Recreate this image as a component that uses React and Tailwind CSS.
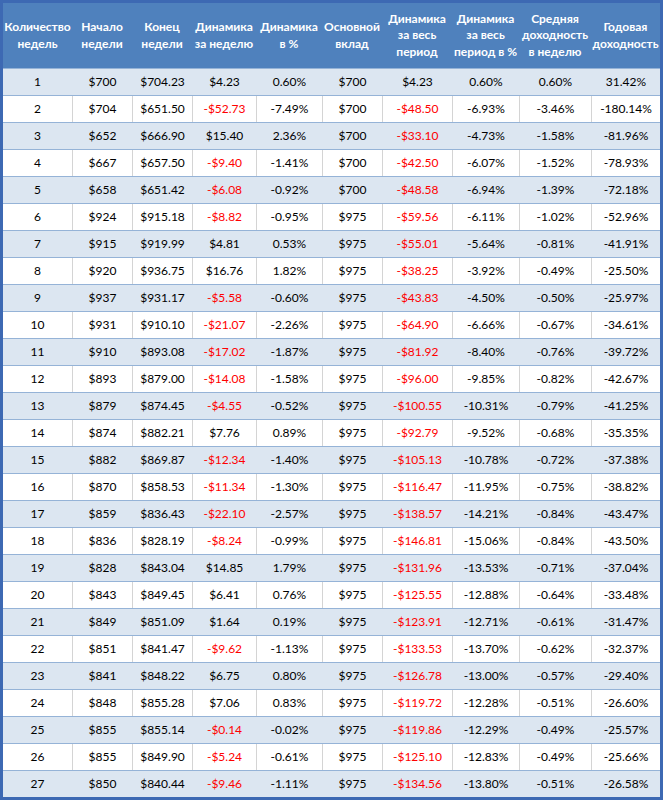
import React from "react";

// column widths taken from the grid lines of the sheet
const cols = "grid-cols-[69px_60px_60px_64px_66px_60px_70px_67px_72px_69px]";

const headers = [
  ["Количество", "недель"],
  ["Начало", "недели"],
  ["Конец", "недели"],
  ["Динамика", "за неделю"],
  ["Динамика", "в %"],
  ["Основной", "вклад"],
  ["Динамика", "за весь", "период"],
  ["Динамика", "за весь", "период в %"],
  ["Средняя", "доходность", "в неделю"],
  ["Годовая", "доходность"],
];

const rows = [
  ["1", "$700", "$704.23", "$4.23", "0.60%", "$700", "$4.23", "0.60%", "0.60%", "31.42%"],
  ["2", "$704", "$651.50", "-$52.73", "-7.49%", "$700", "-$48.50", "-6.93%", "-3.46%", "-180.14%"],
  ["3", "$652", "$666.90", "$15.40", "2.36%", "$700", "-$33.10", "-4.73%", "-1.58%", "-81.96%"],
  ["4", "$667", "$657.50", "-$9.40", "-1.41%", "$700", "-$42.50", "-6.07%", "-1.52%", "-78.93%"],
  ["5", "$658", "$651.42", "-$6.08", "-0.92%", "$700", "-$48.58", "-6.94%", "-1.39%", "-72.18%"],
  ["6", "$924", "$915.18", "-$8.82", "-0.95%", "$975", "-$59.56", "-6.11%", "-1.02%", "-52.96%"],
  ["7", "$915", "$919.99", "$4.81", "0.53%", "$975", "-$55.01", "-5.64%", "-0.81%", "-41.91%"],
  ["8", "$920", "$936.75", "$16.76", "1.82%", "$975", "-$38.25", "-3.92%", "-0.49%", "-25.50%"],
  ["9", "$937", "$931.17", "-$5.58", "-0.60%", "$975", "-$43.83", "-4.50%", "-0.50%", "-25.97%"],
  ["10", "$931", "$910.10", "-$21.07", "-2.26%", "$975", "-$64.90", "-6.66%", "-0.67%", "-34.61%"],
  ["11", "$910", "$893.08", "-$17.02", "-1.87%", "$975", "-$81.92", "-8.40%", "-0.76%", "-39.72%"],
  ["12", "$893", "$879.00", "-$14.08", "-1.58%", "$975", "-$96.00", "-9.85%", "-0.82%", "-42.67%"],
  ["13", "$879", "$874.45", "-$4.55", "-0.52%", "$975", "-$100.55", "-10.31%", "-0.79%", "-41.25%"],
  ["14", "$874", "$882.21", "$7.76", "0.89%", "$975", "-$92.79", "-9.52%", "-0.68%", "-35.35%"],
  ["15", "$882", "$869.87", "-$12.34", "-1.40%", "$975", "-$105.13", "-10.78%", "-0.72%", "-37.38%"],
  ["16", "$870", "$858.53", "-$11.34", "-1.30%", "$975", "-$116.47", "-11.95%", "-0.75%", "-38.82%"],
  ["17", "$859", "$836.43", "-$22.10", "-2.57%", "$975", "-$138.57", "-14.21%", "-0.84%", "-43.47%"],
  ["18", "$836", "$828.19", "-$8.24", "-0.99%", "$975", "-$146.81", "-15.06%", "-0.84%", "-43.50%"],
  ["19", "$828", "$843.04", "$14.85", "1.79%", "$975", "-$131.96", "-13.53%", "-0.71%", "-37.04%"],
  ["20", "$843", "$849.45", "$6.41", "0.76%", "$975", "-$125.55", "-12.88%", "-0.64%", "-33.48%"],
  ["21", "$849", "$851.09", "$1.64", "0.19%", "$975", "-$123.91", "-12.71%", "-0.61%", "-31.47%"],
  ["22", "$851", "$841.47", "-$9.62", "-1.13%", "$975", "-$133.53", "-13.70%", "-0.62%", "-32.37%"],
  ["23", "$841", "$848.22", "$6.75", "0.80%", "$975", "-$126.78", "-13.00%", "-0.57%", "-29.40%"],
  ["24", "$848", "$855.28", "$7.06", "0.83%", "$975", "-$119.72", "-12.28%", "-0.51%", "-26.60%"],
  ["25", "$855", "$855.14", "-$0.14", "-0.02%", "$975", "-$119.86", "-12.29%", "-0.49%", "-25.57%"],
  ["26", "$855", "$849.90", "-$5.24", "-0.61%", "$975", "-$125.10", "-12.83%", "-0.49%", "-25.66%"],
  ["27", "$850", "$840.44", "-$9.46", "-1.11%", "$975", "-$134.56", "-13.80%", "-0.51%", "-26.58%"],
];

// money columns turn red when the value drops
const redCols = [3, 6];

const App = () => {
  return (
    <div className="w-[663px] h-[800px] border-[3px] border-[#3d69b3] bg-white font-['Lato',sans-serif] text-[12px] text-black">
      {/* header */}
      <div className={`grid ${cols} h-[65px] bg-[#4f81bd] text-white font-bold text-[12px] leading-[16.5px]`}>
        {headers.map((lines, i) => (
          <div key={i} className="flex flex-col items-center justify-center text-center whitespace-nowrap">
            {lines.map((l) => (
              <span key={l}>{l}</span>
            ))}
          </div>
        ))}
      </div>

      {/* body */}
      {rows.map((row, r) => {
        const shaded = r % 2 === 0;
        return (
          <div
            key={row[0]}
            className={`grid ${cols} h-[27px] border-t border-[#95b3d7] ${shaded ? "bg-[#dce6f1]" : "bg-white"}`}
          >
            {row.map((cell, c) => (
              <div
                key={c}
                className={`flex items-center justify-center ${c > 0 ? (shaded ? "border-l border-[#dce6f1]" : "border-l border-[#d4d4d4]") : ""} ${
                  redCols.includes(c) && cell.startsWith("-") ? "text-[#ff0000]" : ""
                }`}
              >
                {cell}
              </div>
            ))}
          </div>
        );
      })}
    </div>
  );
};

export default App;
